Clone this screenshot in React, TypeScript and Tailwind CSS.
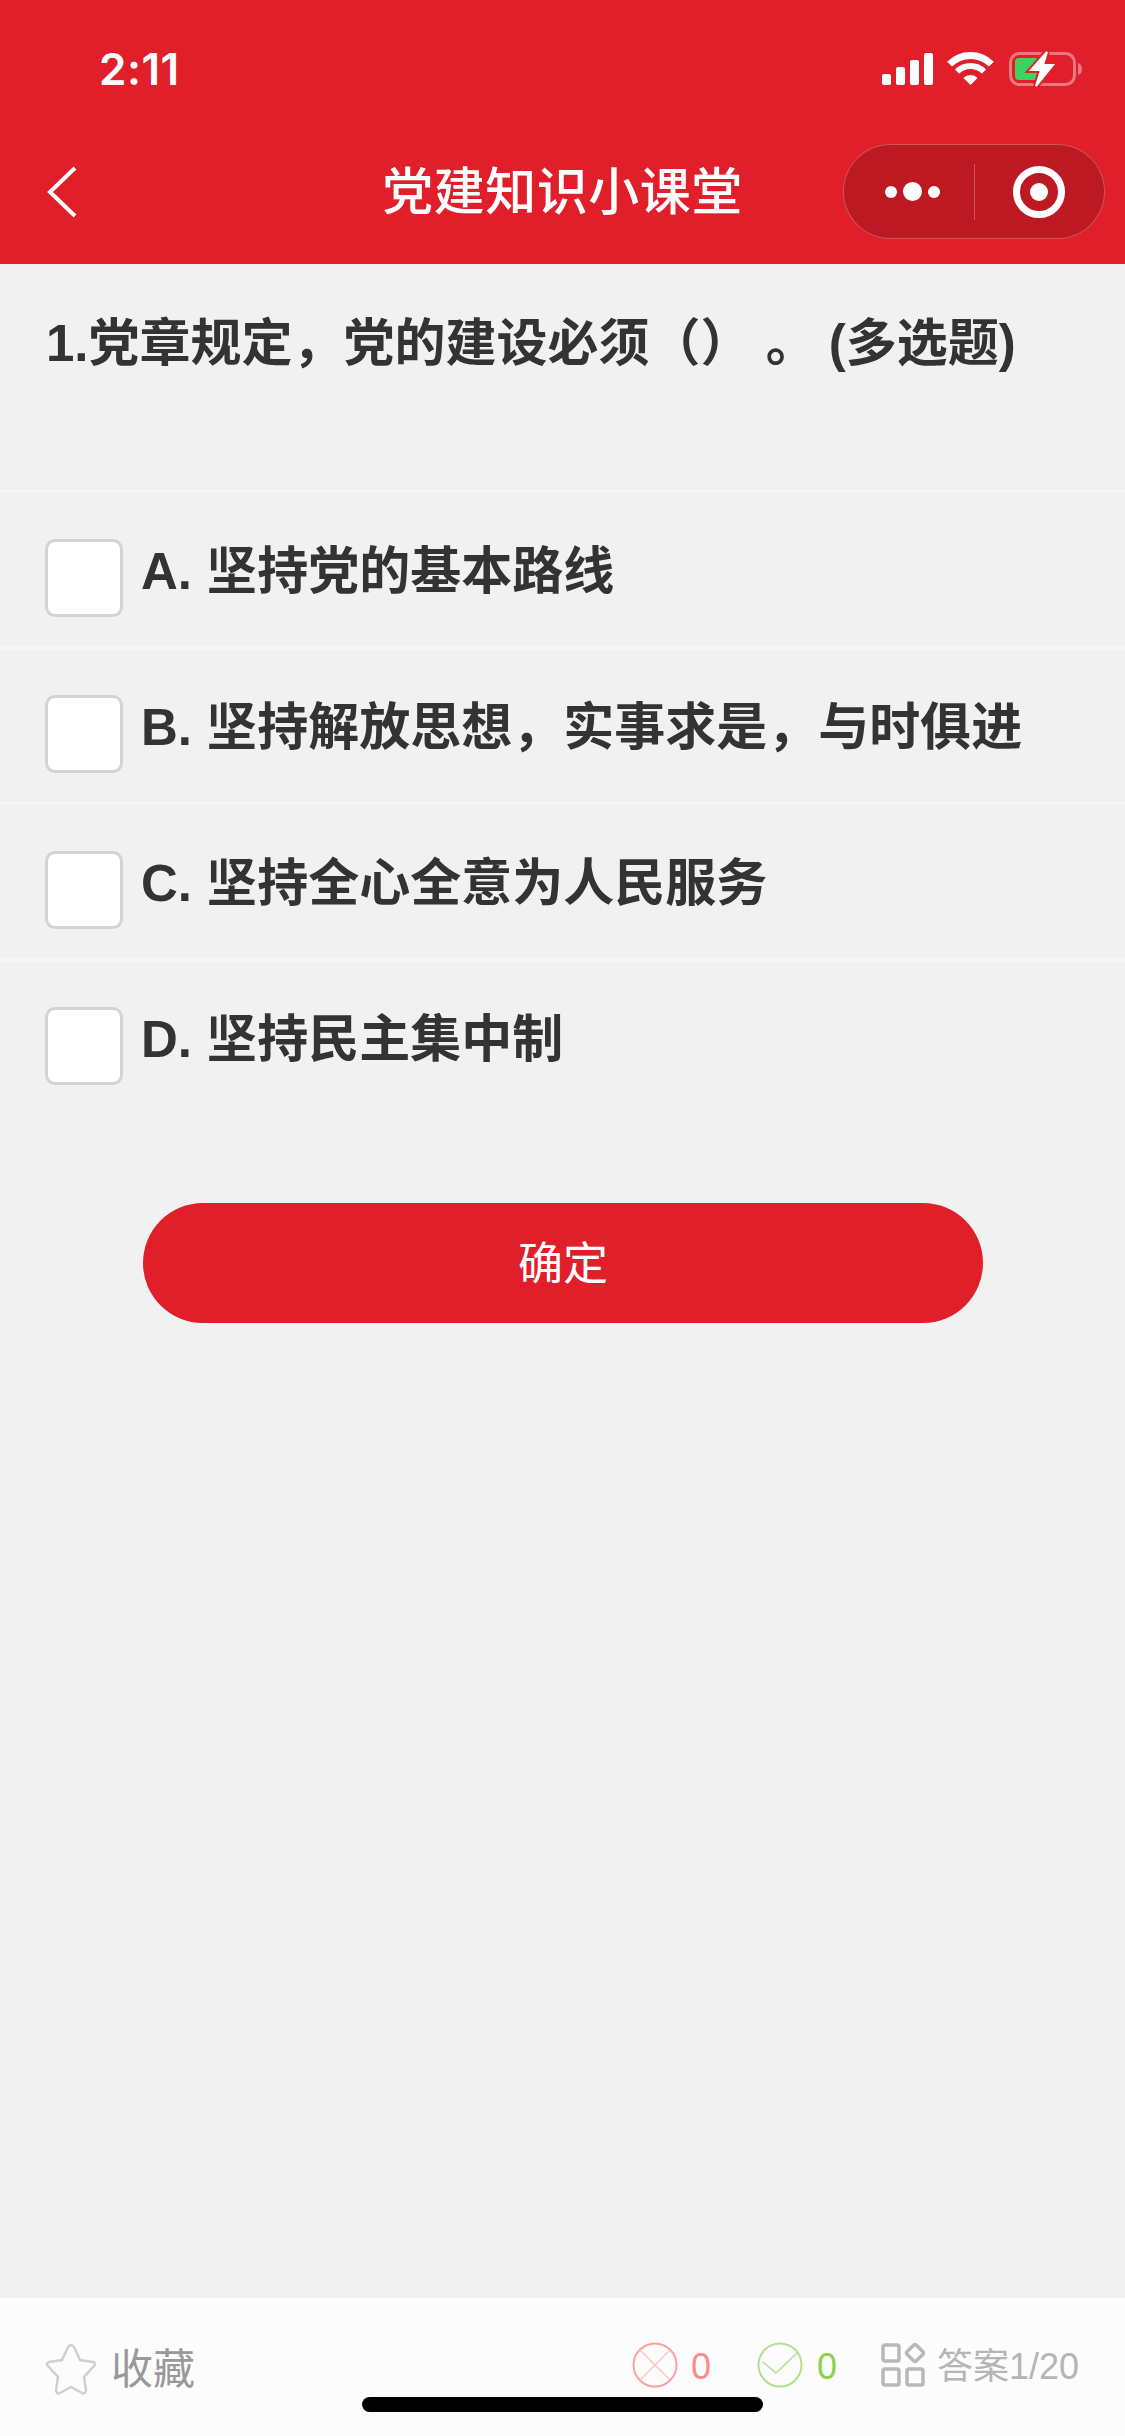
const options = [
  { label: 'A.', text: '坚持党的基本路线' },
  { label: 'B.', text: '坚持解放思想，实事求是，与时俱进' },
  { label: 'C.', text: '坚持全心全意为人民服务' },
  { label: 'D.', text: '坚持民主集中制' },
];

function StatusIcons() {
  return (
    <svg width="200" height="38" viewBox="0 0 200 38" fill="none">
      {/* signal */}
      <rect x="0" y="24" width="9" height="11" rx="2" fill="#fff" />
      <rect x="14" y="17" width="9" height="18" rx="2" fill="#fff" />
      <rect x="28" y="10" width="9" height="25" rx="2" fill="#fff" />
      <rect x="42" y="3" width="9" height="32" rx="2" fill="#fff" />
      {/* wifi */}
      <path d="M67.600 14.100A29.500 29.500 0 0 1 109.400 14.100" stroke="#fff" strokeWidth="7" />
      <path d="M75.100 21.600A19 19 0 0 1 101.900 21.600" stroke="#fff" strokeWidth="6" />
      <path d="M88.500 35 81.400 27.900A10 10 0 0 1 95.600 27.900z" fill="#fff" />
      {/* battery */}
      <rect x="128.500" y="3.500" width="64" height="31" rx="9" stroke="#fff" strokeOpacity="0.4" strokeWidth="3" />
      <path d="M196 13c3 1 4 3 4 6s-1 5-4 6z" fill="#fff" fillOpacity="0.4" />
      <rect x="133" y="8" width="24" height="22" rx="4" fill="#3bd45f" />
      <path d="M165 2 149 20h10l-5 16 17-21h-10z" fill="#e01f2b" stroke="#e01f2b" strokeWidth="6" />
      <path d="M165 2 149 20h10l-5 16 17-21h-10z" fill="#fff" stroke="#fff" strokeWidth="2" />
    </svg>
  );
}

function Capsule() {
  return (
    <div className="flex h-[95px] w-[262px] items-center rounded-full border border-white/25 bg-[#bd1923]">
      <div className="flex w-[130px] items-center justify-end gap-[6px] pr-[34px]">
        <span className="h-[12px] w-[12px] rounded-full bg-white" />
        <span className="h-[19px] w-[19px] rounded-full bg-white" />
        <span className="h-[12px] w-[12px] rounded-full bg-white" />
      </div>
      <div className="h-[56px] w-px bg-white/25" />
      <div className="flex flex-1 items-center justify-center pr-[2px]">
        <div className="flex h-[52px] w-[52px] items-center justify-center rounded-full border-[7px] border-white">
          <span className="h-[18px] w-[18px] rounded-full bg-white" />
        </div>
      </div>
    </div>
  );
}

export default function App() {
  return (
    <div className="relative flex min-h-[2436px] w-[1125px] flex-col bg-[#f1f1f1] font-['Liberation_Sans','Noto_Sans_CJK_SC',sans-serif]">
      {/* Header */}
      <header className="h-[264px] bg-[#e01f2b] text-white">
        <div className="flex h-[136px] items-start justify-between pt-[50px] pl-[99px] pr-[43px]">
          <span className="font-['Inter',sans-serif] text-[44px] leading-[38px] font-semibold tracking-[0.5px]">2:11</span>
          <StatusIcons />
        </div>
        <div className="relative flex h-[110px] items-center justify-center">
          <svg className="absolute left-[46px] top-[30px]" width="32" height="52" viewBox="0 0 32 52" fill="none">
            <path d="M29 2 4 26l25 24" stroke="#fff" strokeWidth="4" />
          </svg>
          <h1 className="pt-[3px] text-[51px] leading-none font-medium tracking-[0.5px]">党建知识小课堂</h1>
          <div className="absolute right-[20px] top-[8px]">
            <Capsule />
          </div>
        </div>
      </header>

      {/* Question */}
      <main className="flex-1">
        <div className="h-[226px] px-[46px] pt-[51px] text-[51px] leading-[58px] font-bold text-[#333]">
          1.党章规定，党的建设必须（） 。<span className="ml-[12px]">(多选题)</span>
        </div>
        {options.map((option) => (
          <div key={option.label} className="flex h-[156px] items-start gap-[18px] border-t-[3px] border-[#f6f6f6] pl-[45px] pt-[46px]">
            <div className="h-[78px] w-[78px] shrink-0 rounded-[10px] border-[3px] border-[#d4d4d4] bg-white" />
            <p className="mt-[4px] text-[51px] leading-[58px] font-bold text-[#333]">
              {option.label} {option.text}
            </p>
          </div>
        ))}
        <div className="mt-[89px] pl-[143px] pr-[142px]">
          <button className="h-[120px] w-full rounded-full bg-[#e01f2b] pt-[3px] text-[45px] text-white">确定</button>
        </div>
      </main>

      {/* Bottom bar */}
      <footer className="flex h-[138px] items-start justify-between bg-[#fcfcfc] pl-[45px] pr-[46px] pt-[44px]">
        <div className="flex items-center gap-[14px]">
          <svg width="52" height="54" viewBox="0 0 50 54" fill="none">
            <path d="M25 3c2 0 3 2 4 4l5 11 13 2c3 1 2 3 1 4l-10 11 2 13c0 3-2 4-4 3l-11-6-11 6c-2 1-4 0-4-3l2-13L2 24c-1-1-2-3 1-4l13-2 5-11c1-2 2-4 4-4z" stroke="#cfcfcf" strokeWidth="2.500" />
          </svg>
          <span className="pt-[1px] text-[42px] leading-none text-[#999]">收藏</span>
        </div>
        <div className="flex items-center">
          <svg width="46" height="46" viewBox="0 0 46 46" fill="none">
            <circle cx="23" cy="23" r="21.500" stroke="#ff9f9f" strokeWidth="2" />
            <path d="m8 8 30 30M38 8 8 38" stroke="#ffc4c4" strokeWidth="1.500" />
          </svg>
          <span className="ml-[13px] w-[66px] pt-[4px] text-[36px] leading-none text-[#ff8a8a]">0</span>
          <svg width="46" height="46" viewBox="0 0 46 46" fill="none">
            <circle cx="23" cy="23" r="21.500" stroke="#b2e08c" strokeWidth="2" />
            <path d="m6 20 13 11 21-20" stroke="#b2e08c" strokeWidth="1.500" />
          </svg>
          <span className="ml-[14px] w-[64px] pt-[4px] text-[36px] leading-none text-[#8cd24b]">0</span>
          <svg width="44" height="44" viewBox="0 0 44 44" fill="none" stroke="#b8b8b8" strokeWidth="3.500">
            <rect x="2" y="2" width="16" height="16" rx="2" />
            <rect x="2" y="26" width="16" height="16" rx="2" />
            <rect x="26" y="26" width="16" height="16" rx="2" />
            <rect x="27.500" y="3.500" width="13" height="13" rx="2" transform="rotate(45 34 10)" />
          </svg>
          <span className="ml-[12px] pt-[4px] text-[36px] leading-none text-[#b5b5b5]">答案1/20</span>
        </div>
      </footer>

      {/* Home indicator */}
      <div className="absolute left-[362px] top-[2397px] h-[15px] w-[401px] rounded-full bg-black" />
    </div>
  );
}
